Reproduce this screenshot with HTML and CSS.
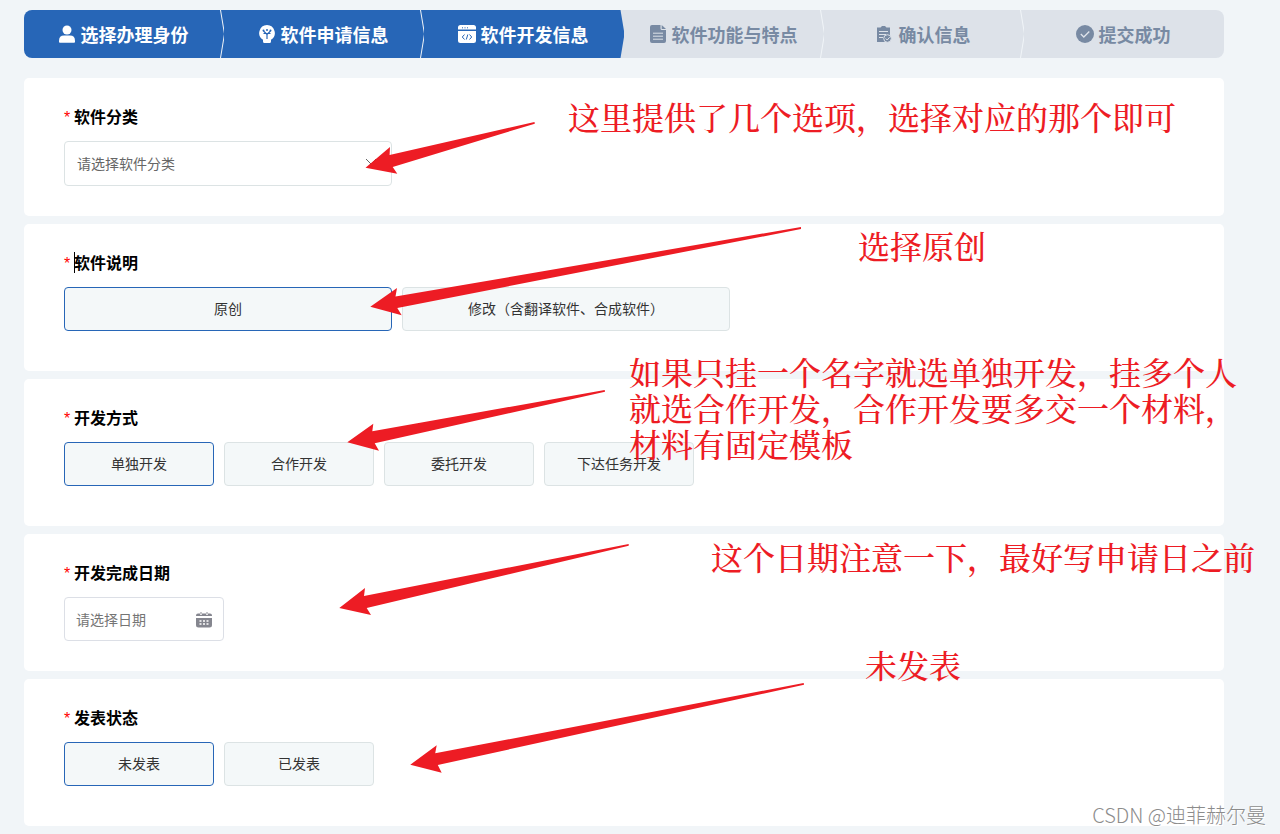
FILE: index.html
```
<!DOCTYPE html>
<html lang="zh-CN">
  <head>
    <meta charset="UTF-8" />
    <meta name="viewport" content="width=device-width, initial-scale=1.0" />
    <title>软件开发信息</title>
    <link rel="stylesheet" href="styles.css">
  </head>
  <body>
    <div class="page">
      <ol class="steps">
        <li class="step done">
          <svg class="icon" viewBox="0 0 18 18"><circle cx="9" cy="5" r="4.5" fill="currentColor"/><path d="M1 17v-1.200Q1 10.500 6 10.500h6Q17 10.500 17 15.800v1.200Q17 17.800 16 17.800H2Q1 17.800 1 17z" fill="currentColor"/></svg>
          <span>选择办理身份</span>
          <svg class="divider" viewBox="0 0 5 48"><path d="M.5 0 4.500 24 .5 48"/></svg>
        </li>
        <li class="step done">
          <svg class="icon" viewBox="0 0 18 18"><path d="M9 0a8 8 0 0 0-4 14.800V16.500Q5 18 6.500 18h5Q13 18 13 16.500V14.800A8 8 0 0 0 9 0z" fill="currentColor"/><path d="M5.500 6 9 9.500 12.500 6M9 9.500V14M5.500 8.500h7" fill="none" stroke="#2766b7" stroke-width="1.200"/><g fill="#2766b7"><circle cx="5.500" cy="5.500" r="1"/><circle cx="9" cy="5" r="1"/><circle cx="12.500" cy="5.500" r="1"/></g></svg>
          <span>软件申请信息</span>
          <svg class="divider" viewBox="0 0 5 48"><path d="M.5 0 4.500 24 .5 48"/></svg>
        </li>
        <li class="step done">
          <svg class="icon" viewBox="0 0 18 18"><path d="M2.500 0h13Q18 0 18 2.500V4.500H0V2.500Q0 0 2.500 0zM0 6h18v9.500Q18 18 15.500 18h-13Q0 18 0 15.500z" fill="currentColor"/><path d="M4 2.800h1M6.500 2.800h1M9 2.800h1M6.500 9.500 4.300 12l2.200 2.500M11.500 9.500l2.200 2.500-2.200 2.500M9.800 9.500l-1.500 5" fill="none" stroke="#2766b7"/></svg>
          <span>软件开发信息</span>
          <svg class="divider current" viewBox="0 0 5 48"><path d="M.5 0 4.500 24 .5 48H5V0z"/></svg>
        </li>
        <li class="step">
          <svg class="icon" viewBox="0 0 18 18"><path d="M3 0h8.500v3.500Q11.500 5 13 5H17v11Q17 18 15 18H3Q1 18 1 16V2Q1 0 3 0z" fill="currentColor"/><path d="M12.700 0 17 4h-4.300z" fill="currentColor"/><path d="M4 8.200h10M4 11.200h10M4 14.200h10" stroke="#dde2e9"/></svg>
          <span>软件功能与特点</span>
          <svg class="divider" viewBox="0 0 5 48"><path d="M.5 0 4.500 24 .5 48"/></svg>
        </li>
        <li class="step">
          <svg class="icon" viewBox="0 0 18 18"><path d="M1 2.500h3.500L6 1h3l1.500 1.500H14V17H1z" fill="currentColor"/><path d="M3 6.500h9M3 9.500h7M3 12.500h4" stroke="#dde2e9"/><circle cx="11.500" cy="13.500" r="3.800" fill="currentColor" stroke="#dde2e9"/><path d="m9.700 13.500 1.500 1.500 2.500-2.800" fill="none" stroke="#dde2e9"/></svg>
          <span>确认信息</span>
          <svg class="divider" viewBox="0 0 5 48"><path d="M.5 0 4.500 24 .5 48"/></svg>
        </li>
        <li class="step">
          <svg class="icon" viewBox="0 0 18 18"><circle cx="9" cy="9" r="9" fill="currentColor"/><path d="m4.800 9 3 3 5.500-5.500" fill="none" stroke="#dde2e9" stroke-width="1.300"/></svg>
          <span>提交成功</span>
        </li>
      </ol>

      <form class="form">
        <section class="card">
          <label class="title" for="category"><i>*</i>软件分类</label>
          <div class="field select-field">
            <select id="category">
              <option>请选择软件分类</option>
            </select>
            <svg class="chevron" viewBox="0 0 12 8"><path d="m1 1 5 5 5-5" fill="none" stroke="#666"/></svg>
          </div>
        </section>

        <section class="card tall">
          <h2 class="title"><i>*</i><span class="caret"></span>软件说明</h2>
          <div class="options wide">
            <button type="button" class="selected">原创</button>
            <button type="button">修改（含翻译软件、合成软件）</button>
          </div>
        </section>

        <section class="card tall">
          <h2 class="title"><i>*</i>开发方式</h2>
          <div class="options">
            <button type="button" class="selected">单独开发</button>
            <button type="button">合作开发</button>
            <button type="button">委托开发</button>
            <button type="button">下达任务开发</button>
          </div>
        </section>

        <section class="card">
          <label class="title" for="date"><i>*</i>开发完成日期</label>
          <div class="field date-field">
            <input id="date" type="text" placeholder="请选择日期">
            <svg class="calendar" viewBox="0 0 16 16"><path d="M2 1.500h12q2 0 2 2V4H0v-.5q0-2 2-2zM0 6h16v7q0 2.500-2.500 2.500h-11Q0 15.500 0 13z" fill="#85868f"/><path d="M5 0v3M11 0v3" stroke="#fff" stroke-width="2"/><path d="M5 0v2.500M11 0v2.500" stroke="#85868f"/><path d="M3.500 9h2M7 9h2M10.500 9h2M3.500 12h2M7 12h2M10.500 12h2" stroke="#fff" stroke-width="1.300"/></svg>
          </div>
        </section>

        <section class="card tall">
          <h2 class="title"><i>*</i>发表状态</h2>
          <div class="options">
            <button type="button" class="selected">未发表</button>
            <button type="button">已发表</button>
          </div>
        </section>
      </form>

      <!-- red notes drawn over the form -->
      <svg class="arrows" width="1280" height="834" viewBox="0 0 1280 834">
        <path d="M365.500 167.700 390 147l-.4 8L534.500 122l.3 1.700L392.700 167l4.600 6.700z"/>
        <path d="M370.300 306.700 397 288l-1.500 8.500L801 227v2L397.300 308l4.400 7.300z"/>
        <path d="M347.300 442.300 373.300 423.700l-1 7.600L604.700 390l.3 1.700L374.700 443.300l4.300 7.400z"/>
        <path d="M339.300 608 365 588l-1 8 264.700-52v1.700L366.700 608l4.300 7z"/>
        <path d="M410.300 764.700 436.700 745.300l-1.500 8L803.700 683l.3 1.700L437.800 765l3.900 7.700z"/>
      </svg>
      <p class="note note-category">这里提供了几个选项，选择对应的那个即可</p>
      <p class="note note-origin">选择原创</p>
      <p class="note note-mode">如果只挂一个名字就选单独开发，挂多个人<br>就选合作开发，合作开发要多交一个材料，<br>材料有固定模板</p>
      <p class="note note-date">这个日期注意一下，最好写申请日之前</p>
      <p class="note note-status">未发表</p>
      <p class="watermark">CSDN @迪菲赫尔曼</p>
    </div>
  </body>
</html>
```
FILE: styles.css
```
* {
  box-sizing: border-box;
}
body {
  margin: 0;
  background-color: #f1f5f8;
  color: #333;
  font-family: "Noto Sans CJK SC", sans-serif;
  font-size: 14px;
}
.page {
  position: relative;
  padding: 10px 56px 8px 24px;
  overflow: hidden;
}
.steps {
  display: flex;
  margin: 0 0 20px;
  padding: 0;
  list-style: none;
  border-radius: 8px;
  overflow: hidden;
}
.step {
  position: relative;
  flex: 1;
  height: 48px;
  display: flex;
  align-items: center;
  justify-content: center;
  gap: 5px;
  padding-right: 2px;
  background-color: #dde2e9;
  color: #788aa3;
  font-size: 18px;
  font-weight: bold;
  white-space: nowrap;
}
.step.done {
  background-color: #2766b7;
  color: #fff;
}
.icon {
  width: 18px;
  height: 18px;
}
.divider {
  position: absolute;
  top: 0;
  right: -1px;
  width: 5px;
  height: 48px;
  fill: none;
  stroke: #f1f5f8;
}
/* blue to grey edge, the grey fills the notch */
.divider.current {
  fill: #dde2e9;
  stroke: none;
}
.form {
  display: flex;
  flex-direction: column;
  gap: 8px;
}
.card {
  padding: 26px 40px 30px;
  border-radius: 5px;
  background-color: #fff;
}
.card.tall {
  padding-bottom: 40px;
}
.title {
  position: relative;
  display: flex;
  height: 24px;
  margin: 0 0 13px;
  color: #000;
  font-size: 16px;
  font-weight: bold;
  line-height: 24px;
}
.title i {
  width: 10px;
  padding-top: 2px;
  color: #f00;
  font-family: "Liberation Sans", sans-serif;
  font-style: normal;
  font-weight: normal;
}
.caret {
  position: absolute;
  left: 10px;
  top: 2px;
  width: 1px;
  height: 21px;
  background-color: #000;
}
.field {
  position: relative;
}
.select-field {
  width: 328px;
}
.date-field {
  width: 160px;
}
.field select,
.field input {
  display: block;
  width: 100%;
  height: 44px;
  padding: 0 12px;
  border: 1px solid #dce3e4;
  border-radius: 4px;
  background-color: #fff;
  color: #666;
  font: inherit;
  appearance: none;
  outline: none;
}
.field select {
  height: 45px;
  padding-bottom: 2px;
}
.field input {
  padding: 0 40px 0 11px;
  border-color: #dcdfe6;
}
.field input::placeholder {
  color: #757575;
}
.chevron {
  position: absolute;
  top: 17px;
  right: 15px;
  width: 12px;
  height: 8px;
}
.calendar {
  position: absolute;
  top: 15px;
  right: 12px;
  width: 16px;
  height: 16px;
}
.options {
  display: flex;
  gap: 10px;
}
.options button {
  width: 150px;
  height: 44px;
  padding: 0 0 2px;
  border: 1px solid #dce3e4;
  border-radius: 4px;
  background-color: #f4f8f9;
  color: #333;
  font: inherit;
}
.options.wide button {
  width: 328px;
}
.options button.selected {
  border-color: #2766b7;
}
.arrows {
  position: absolute;
  top: 0;
  left: 0;
  fill: #ed1c24;
  pointer-events: none;
}
.note {
  position: absolute;
  margin: 0;
  color: #ed1c24;
  font-family: "Noto Serif CJK SC", "Noto Sans CJK SC", serif;
  font-size: 32px;
  font-weight: 500;
  line-height: 36px;
  white-space: nowrap;
  pointer-events: none;
}
.note-category {
  left: 568px;
  top: 98px;
}
.note-origin {
  left: 858px;
  top: 227px;
}
.note-mode {
  left: 629px;
  top: 353px;
}
.note-date {
  left: 711px;
  top: 538px;
}
.note-status {
  left: 865px;
  top: 646px;
}
.watermark {
  position: absolute;
  right: 14px;
  bottom: 4px;
  margin: 0;
  color: #8c8c8c;
  font-size: 20px;
  font-weight: 300;
  line-height: 30px;
  text-shadow: 1px 1px 0 #fff;
}
```
